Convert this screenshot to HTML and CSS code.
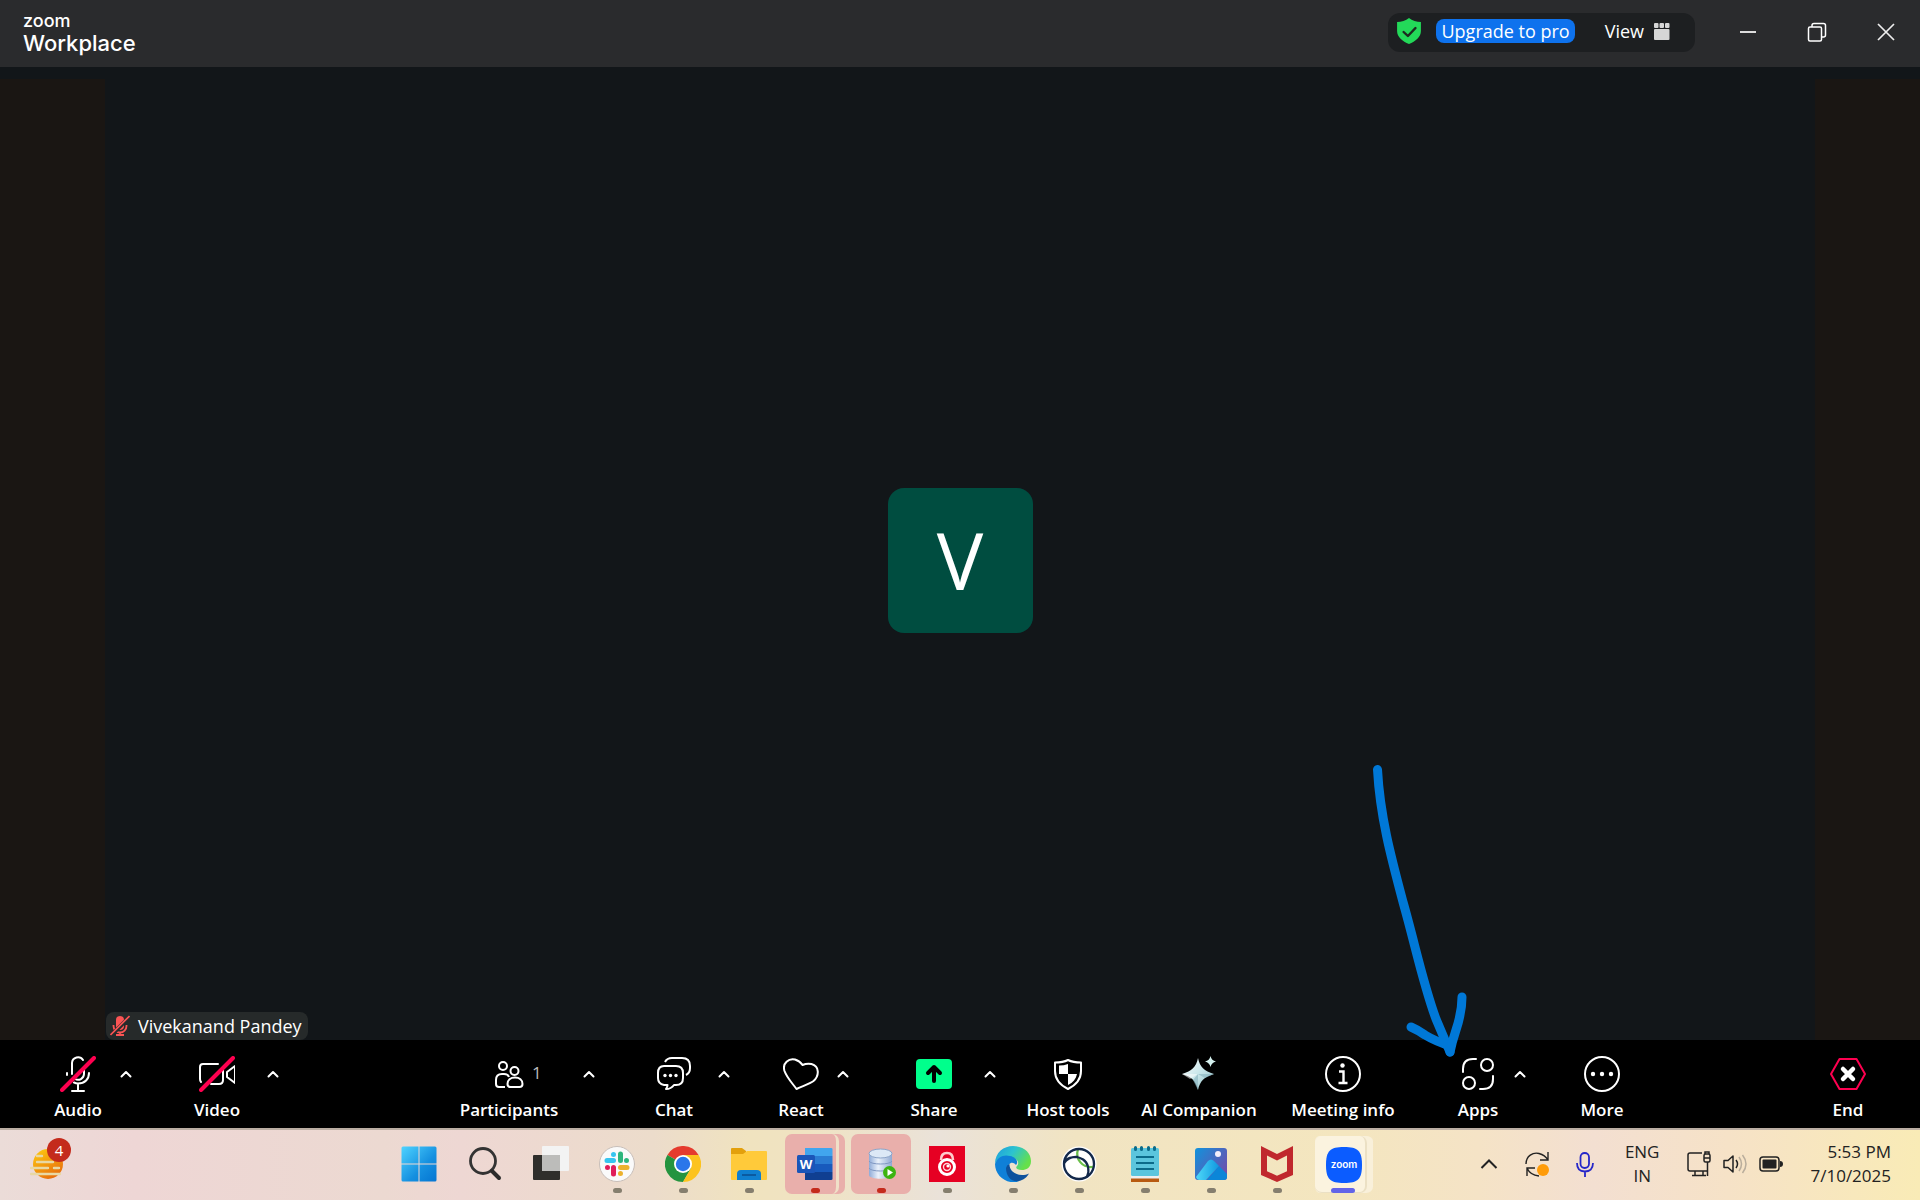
FILE: index.html
```html
<!DOCTYPE html>
<html lang="en">
<head>
<meta charset="utf-8">
<title>Zoom Workplace</title>
<link rel="stylesheet" href="styles.css">
</head>
<body>
<svg class="defs" width="0" height="0" aria-hidden="true">
  <symbol id="up" viewBox="0 0 12 8"><path d="M1.500 6.500 6 2l4.500 4.500" fill="none" stroke="currentColor" stroke-width="2" stroke-linecap="round" stroke-linejoin="round"/></symbol>
</svg>

<header class="titlebar">
  <div class="brand"><span class="brand-zoom">zoom</span><span class="brand-name">Workplace</span></div>
  <div class="status">
    <svg width="26" height="28" viewBox="0 0 24 28" preserveAspectRatio="none"><path d="M12 1c3 2.400 7 4 11 4v9c0 6-5 10.500-11 13C6 24.500 1 20 1 14V5c4 0 8-1.600 11-4z" fill="#23d959"/><path d="m7 15 4 4 7-8" fill="none" stroke="#1d2a20" stroke-width="2.200" stroke-linecap="round" stroke-linejoin="round"/></svg>
    <button class="upgrade">Upgrade to pro</button>
    <button class="view">View
      <svg width="16" height="17" viewBox="0 0 16 17" fill="#d6d6d6"><rect width="4.500" height="5" rx="1"/><rect x="5.500" width="4.500" height="5" rx="1"/><rect x="11" width="4.500" height="5" rx="1"/><rect y="6" width="15.500" height="11" rx="1"/></svg>
    </button>
  </div>
  <div class="window-buttons">
    <button aria-label="Minimize"><svg width="20" height="20" viewBox="0 0 20 20"><path d="M2 10h16" stroke="#ddd" stroke-width="2"/></svg></button>
    <button aria-label="Restore"><svg width="20" height="20" viewBox="0 0 20 20" fill="none" stroke="#fff" stroke-width="1.500"><rect x="1.500" y="5" width="13" height="14" rx="1.500"/><path d="M5 5V3.500Q5 1.500 7 1.500h9.500q2 0 2 2V13q0 2-2 2h-2"/></svg></button>
    <button aria-label="Close"><svg width="20" height="20" viewBox="0 0 20 20"><path d="m2 2 16 16M18 2 2 18" stroke="#eee" stroke-width="1.700"/></svg></button>
  </div>
</header>

<main class="stage">
  <div class="side"></div>
  <section class="video">
    <div class="avatar">V</div>
    <div class="nametag">
      <svg width="20" height="22" viewBox="0 0 20 22"><rect x="6" y="1" width="8" height="14" rx="4" fill="#fa5454"/><path d="M3.500 10v1a6.500 6.500 0 0 0 13 0v-1M10 17v3M6 20h8" fill="none" stroke="#fa5454" stroke-width="1.800"/><path d="M1 20.500 20 1.500" stroke="#262a2a" stroke-width="4"/><path d="M.5 20 19.500 1" stroke="#fa5454" stroke-width="1.600"/></svg>
      Vivekanand Pandey
    </div>
  </section>
  <div class="side"></div>
</main>

<nav class="toolbar">
  <div class="group group-wide">
    <div class="split">
      <button class="tool w76"><svg width="36" height="36" viewBox="0 0 36 36" fill="none" stroke="#fff" stroke-width="2" stroke-linecap="round"><path d="M12 18V7a6 6 0 0 1 11-3M24 13v5a6 6 0 0 1-9 5M7 17v2M29 17c0 6-4 10.500-11 10.500q-2 0-4-1M18 28v6M12 35h12"/><path d="M2 34 34 2" stroke="#ff0050" stroke-width="4"/></svg>Audio</button>
      <button class="chev" aria-label="Audio options"><svg><use href="#up"/></svg></button>
    </div>
    <div class="split">
      <button class="tool w92"><svg width="36" height="36" viewBox="0 0 36 36" fill="none" stroke="#fff" stroke-width="2" stroke-linecap="round" stroke-linejoin="round"><path d="M2 26q-1-1-1-3V11q0-3 3-3h15M24 12v12q0 4-4 4h-8M36 10v17l-8-6v-5z"/><path d="M2 34 34 2" stroke="#ff0050" stroke-width="4"/></svg>Video</button>
      <button class="chev" aria-label="Video options"><svg><use href="#up"/></svg></button>
    </div>
  </div>

  <div class="center">
    <div class="group group-wide">
      <div class="split">
        <button class="tool w140"><span class="badge-wrap"><svg width="36" height="36" viewBox="0 0 36 36" fill="none" stroke="#fff" stroke-width="2"><circle cx="12" cy="10" r="4"/><circle cx="23.500" cy="15" r="4"/><path d="M14 31H8q-3 0-3-3v-4q0-6 6-6h2q4 0 5 3M16.500 28c0-4 3-6.500 7.500-6.500s7.500 2.500 7.500 6.500q0 3-3 3h-9q-3 0-3-3z"/></svg><span class="count">1</span></span>Participants</button>
        <button class="chev" aria-label="Participants options"><svg><use href="#up"/></svg></button>
      </div>
      <div class="split">
        <button class="tool w80"><svg width="36" height="36" viewBox="0 0 36 36" fill="none" stroke="#fff" stroke-width="2" stroke-linejoin="round"><path d="M9 6q2-4 7-4h10q8 0 8 8v2q0 5-4 7M8 10h12q7 0 7 7v5q0 7-7 7h-2q-3 4-8 4 1.500-2 1.500-4H8q-6-1-6-7v-5q0-7 6-7z"/><g fill="#fff" stroke="none"><circle cx="9" cy="19.500" r="1.700"/><circle cx="14.500" cy="19.500" r="1.700"/><circle cx="20" cy="19.500" r="1.700"/></g></svg>Chat</button>
        <button class="chev" aria-label="Chat options"><svg><use href="#up"/></svg></button>
      </div>
      <div class="split">
        <button class="tool w64"><svg width="36" height="36" viewBox="0 0 36 36" fill="none" stroke="#fff" stroke-width="2" stroke-linejoin="round"><path d="M13.500 33C10 28 4 22 1.500 15-1 7 6 2 12 3.500q5 1.500 7.500 5.500 4.500-2 9-1c8 2 8 12 2 17-4 3-11 5-17 8z"/></svg>React</button>
        <button class="chev" aria-label="React options"><svg><use href="#up"/></svg></button>
      </div>
      <div class="split">
        <button class="tool w92"><svg width="36" height="36" viewBox="0 0 36 36"><rect y="3" width="36" height="30" rx="4" fill="#00ff8c"/><path d="M18 25V11M12 17l6-6 6 6" fill="none" stroke="#000" stroke-width="4" stroke-linecap="round" stroke-linejoin="round"/></svg>Share</button>
        <button class="chev" aria-label="Share options"><svg><use href="#up"/></svg></button>
      </div>
    </div>
    <div class="group group-tight">
      <button class="tool w96"><svg width="36" height="36" viewBox="0 0 36 36"><path d="M18 4c4 2 9 2.500 13 2.500V15c0 8-5 14-13 18C10 29 5 23 5 15V6.500C9 6.500 14 6 18 4z" fill="none" stroke="#fff" stroke-width="2" stroke-linejoin="round"/><path d="M18 8v10H9V9.500q5 0 9-1.500zM18 18h9c-1 5-4 8.500-9 11z" fill="#fff"/></svg>Host tools</button>
      <button class="tool w126"><svg width="36" height="36" viewBox="0 0 36 36"><defs><linearGradient id="gem" x1="0" y1="0" x2="1" y2="1"><stop offset="0" stop-color="#fff"/><stop offset=".5" stop-color="#c8e6ea"/><stop offset="1" stop-color="#8fbcc4"/></linearGradient></defs><path d="M17 2c2 9 6 13 16 16-10 3-14 7-16 16C15 25 11 21 1 18 11 15 15 11 17 2z" fill="url(#gem)"/><path d="M17 2v16L9 23 1 18l16 0z" fill="#fff" opacity=".5"/><path d="m17 18 7 4 9-4zM17 18l-5 6 5 10z" fill="#8ab5c0" opacity=".65"/><path d="M29.500 0q1 4.500 5.500 5.500-4.500 1-5.500 5.500-1-4.500-5.500-5.500 4.500-1 5.500-5.500z" fill="#d4f0ee"/></svg>AI Companion</button>
      <button class="tool w122"><svg width="36" height="36" viewBox="0 0 36 36" fill="none" stroke="#fff" stroke-width="2"><circle cx="18" cy="18" r="17"/><circle cx="17.500" cy="9.500" r="2.200" fill="#fff" stroke="none"/><path d="M14 15.500h4.500V27M13.500 27h9" stroke-width="2.400"/></svg>Meeting info</button>
    </div>
    <div class="group group-loose">
      <div class="split">
        <button class="tool w64"><svg width="36" height="36" viewBox="0 0 36 36" fill="none" stroke="#fff" stroke-width="2" stroke-linecap="round"><circle cx="27" cy="9" r="6"/><circle cx="9" cy="27" r="6"/><path d="M3 16v-3Q3 3 13 3h3M20 33h3q10 0 10-10v-3"/></svg>Apps</button>
        <button class="chev" aria-label="Apps options"><svg><use href="#up"/></svg></button>
      </div>
      <button class="tool w64"><svg width="36" height="36" viewBox="0 0 36 36"><circle cx="18" cy="18" r="17" fill="none" stroke="#fff" stroke-width="2"/><g fill="#fff"><circle cx="9" cy="18" r="2.200"/><circle cx="18" cy="18" r="2.200"/><circle cx="27" cy="18" r="2.200"/></g></svg>More</button>
    </div>
  </div>

  <button class="tool w64"><svg width="36" height="36" viewBox="0 0 36 36"><path d="M9.500 3h17L35 18l-8.500 15h-17L1 18z" fill="none" stroke="#ff0050" stroke-width="2" stroke-linejoin="round"/><path d="m13 13 10 10M23 13 13 23" stroke="#fff" stroke-width="4.500" stroke-linecap="round"/></svg>End</button>
</nav>

<footer class="taskbar">
  <button class="weather" aria-label="Weather">
    <svg width="34" height="32" viewBox="0 0 34 32"><defs><linearGradient id="sun" x1="0" y1="0" x2=".6" y2="1"><stop offset="0" stop-color="#ffcf10"/><stop offset="1" stop-color="#e86f0c"/></linearGradient></defs><circle cx="18" cy="16" r="15" fill="url(#sun)"/><path d="M7 8h5M7 14h16M1 20h17M24 20h5M1 26h29" stroke="#e8d8a4" stroke-width="2.400" stroke-linecap="round"/></svg>
    <span class="alert">4</span>
  </button>

  <div class="apps">
    <button class="app" aria-label="Start"><svg width="36" height="36" viewBox="0 0 36 36"><defs><linearGradient id="win" x1="0" y1="0" x2="1" y2="1"><stop offset="0" stop-color="#4fd3ff"/><stop offset=".6" stop-color="#1590e0"/><stop offset="1" stop-color="#0575d2"/></linearGradient></defs><path fill="url(#win)" d="M2 .5h15.500v17H.5V2Q.5.500 2 .5zM18.500.5H34q1.500 0 1.500 1.500v15.500h-17zM.5 18.500h17v17H2Q.5 35.500.5 34zM18.500 18.500h17V34q0 1.500-1.500 1.500H18.500z"/></svg></button>
    <button class="app" aria-label="Search"><svg width="36" height="36" viewBox="0 0 36 36" fill="none" stroke="#2b2b2b"><circle cx="16" cy="15" r="12.500" stroke="#333" stroke-width="2.800"/><path d="m25 25 7 7" stroke-width="4" stroke-linecap="round"/></svg></button>
    <button class="app" aria-label="Task view"><svg width="36" height="36" viewBox="0 0 36 36"><rect y="9" width="27" height="25" rx="1" fill="#2f2e2b"/><rect x="9" width="27" height="25" rx="1" fill="#f3f3f3"/><path d="M9 9h18v16H9z" fill="#bcbcba"/></svg></button>
    <button class="app run" aria-label="Slack"><svg width="36" height="36" viewBox="0 0 36 36" stroke-width="5" stroke-linecap="round"><circle cx="18" cy="18" r="17.500" fill="#fafafa" stroke="#c8beb8" stroke-width="1"/><path d="M8 14.500h6.500M14.500 8.500v0" stroke="#36c5f0"/><path d="M21.500 8v6.500M27.500 14.500v0" stroke="#2eb67d"/><path d="M21.500 21.500H28M21.500 27.500v0" stroke="#ecb22e"/><path d="M14.500 21.500V28M8.500 21.500v0" stroke="#e01e5a"/></svg></button>
    <button class="app run" aria-label="Chrome"><svg width="36" height="36" viewBox="0 0 36 36"><path d="M18 18 2.400 9A18 18 0 0 1 33.600 9z" fill="#e53b2e"/><path d="M18 18 2.400 9A18 18 0 0 0 18 36l8-13.500z" fill="#24943f"/><path d="M18 9h15.600A18 18 0 0 1 18 36l7.800-13.500z" fill="#fcc31e"/><circle cx="18" cy="18" r="9" fill="#fff"/><circle cx="18" cy="18" r="7.200" fill="#2a76ea"/></svg></button>
    <button class="app run" aria-label="File Explorer"><svg width="36" height="36" viewBox="0 0 36 36"><path d="M0 3q0-1 1-1h10l4 3v5H0z" fill="#e3a00c"/><path d="M0 8h12l4-3h19q1 0 1 1v27q0 1-1 1H1q-1 0-1-1z" fill="#ffca3a"/><path d="M6 34v-6q0-4 4-4h16q4 0 4 4v6z" fill="#0f7fd0"/><path d="M11 29h14" stroke="#0a5294" stroke-width="1.600"/></svg></button>
    <button class="app run flagged stacked" aria-label="Word"><svg width="36" height="36" viewBox="0 0 36 36"><path d="M8 2h26q1.500 0 1.500 1v7H8z" fill="#41a5ee"/><path d="M8 10h27.500v8H8z" fill="#2b7cd3"/><path d="M8 18h27.500v8H8z" fill="#185abd"/><path d="M8 26h27.500v7q0 1-1.500 1H8z" fill="#103f91"/><rect y="9" width="18" height="18" rx="1.500" fill="#1b55b8"/><text x="9" y="23" text-anchor="middle" font-family="Open Sans, sans-serif" font-weight="700" font-size="13" fill="#fff">W</text></svg></button>
    <button class="app run flagged" aria-label="Database"><svg width="36" height="36" viewBox="0 0 36 36"><defs><linearGradient id="db"><stop offset="0" stop-color="#8fabd8"/><stop offset=".4" stop-color="#eaf1fb"/><stop offset="1" stop-color="#90a9d2"/></linearGradient></defs><path d="M6 7v22c0 5 23 5 23 0V7z" fill="url(#db)"/><ellipse cx="17.500" cy="7.500" rx="11.500" ry="4.500" fill="#dce8f6" stroke="#8ca4c8"/><path d="M6 15c1 4 22 4 23 0M6 22c1 4 22 4 23 0" fill="none" stroke="#8199c3"/><circle cx="26.500" cy="26.500" r="6.500" fill="#3cb411"/><path d="m24.500 23 5.500 3.500-5.500 3.500z" fill="#fff"/></svg></button>
    <button class="app run" aria-label="Lock"><svg width="36" height="36" viewBox="0 0 36 36"><path d="M0 0h36v36H0z" fill="#e60023"/><path d="M12 14q0-7 6-7t6 7" fill="none" stroke="#fcc" stroke-width="2.600"/><circle cx="18" cy="21" r="7.500" fill="#e60023" stroke="#fff" stroke-width="3"/><circle cx="18" cy="21" r="3.500" fill="none" stroke="#ffd5da" stroke-width="1.400"/><circle cx="19" cy="20" r="1.600" fill="#fff"/></svg></button>
    <button class="app run" aria-label="Edge"><svg width="36" height="36" viewBox="0 0 36 36"><defs><linearGradient id="ed" x1="0" y1="0" x2="1" y2=".5"><stop offset="0" stop-color="#1d9be0"/><stop offset=".5" stop-color="#2cc3cf"/><stop offset="1" stop-color="#66e04a"/></linearGradient></defs><path d="M0 18C0 6 9 0 18 0c11 0 18 7 18 15 0 7-5 9-9 9-5 0-7-2-5-4 3-3 0-8-5-8C9 10 2 12 0 18z" fill="url(#ed)"/><path d="M0 18C2 11 9 8 15 10c6 1 9 6 6 9-4-5-9-1-8 5 1 6 5 11 11 11.500C12 39 0 30 0 18z" fill="#0f80d8"/><path d="M11 22c0 8 5 14 12 13.300C29 34 32 31 34 27.500c-8 4-20 0-19.500-9.500q-3 1-3.500 4z" fill="#0d519d"/></svg></button>
    <button class="app run" aria-label="Connection"><svg width="36" height="36" viewBox="0 0 36 36" fill="none" stroke-width="2.300"><circle cx="18" cy="18" r="17.500" fill="#fff"/><path d="M17 3c-3 10 4 19 15 18" stroke="#6abf4b"/><circle cx="18" cy="18" r="15" stroke="#13294b"/><path d="M4 14c13-8 28 1 22 17M3 17q5-7 14-6" stroke="#13294b"/></svg></button>
    <button class="app run" aria-label="Notepad"><svg width="36" height="36" viewBox="0 0 36 36"><path d="M4 32h28v4H4z" fill="#b85a10"/><path d="M4 29h28v3.500H4z" fill="#eee"/><rect x="4" y="2" width="28" height="28" rx="1.500" fill="#5bc5dd"/><path d="M9 11h18M9 17h18M9 23h18" stroke="#0b6b8a" stroke-width="1.800"/><path d="M8.500 1.500v2M14.500 1.500v2M21.500 1.500v2M27.500 1.500v2" stroke="#0b6b8a" stroke-width="3" stroke-linecap="round"/></svg></button>
    <button class="app run" aria-label="Photos"><svg width="36" height="36" viewBox="0 0 36 36"><defs><linearGradient id="ph" x1="0" y1="0" x2="1" y2=".7"><stop offset="0" stop-color="#1193dc"/><stop offset="1" stop-color="#6c4fae"/></linearGradient><linearGradient id="hill"><stop offset="0" stop-color="#4fd8f8"/><stop offset="1" stop-color="#1098e0"/></linearGradient></defs><rect x="2" y="2" width="32" height="32" rx="3" fill="url(#ph)"/><path d="M14 34 26 20l8 8v3q0 3-3 3z" fill="#0b86d8"/><path d="M3 31 15 15q3-3 6 0l5 5-13 14H6q-2 0-3-3z" fill="url(#hill)"/><circle cx="25" cy="8" r="3" fill="#f4eefa"/></svg></button>
    <button class="app run" aria-label="McAfee"><svg width="36" height="36" viewBox="0 0 36 36"><path d="m2 0 16 8 16-8v29l-16 7-16-7zm6 9.500v15.800l10 4.400 10-4.400V9.500l-10 5z" fill="#c0282d" fill-rule="evenodd"/></svg></button>
    <button class="app run current" aria-label="Zoom"><svg width="36" height="36" viewBox="0 0 36 36"><path d="M18 0c14 0 18 4 18 18s-4 18-18 18S0 32 0 18 4 0 18 0z" fill="#0b5cff"/><text x="18" y="21" text-anchor="middle" font-family="Inter, sans-serif" font-weight="600" font-size="10" fill="#fff">zoom</text></svg></button>
  </div>

  <div class="tray">
    <button aria-label="Hidden icons"><svg width="24" height="24" viewBox="0 0 24 24"><path d="m4.500 16 7.500-7.500 7.500 7.500" fill="none" stroke="#222" stroke-width="2"/></svg></button>
    <button class="sync" aria-label="Sync"><svg width="24" height="26" viewBox="0 0 24 26" fill="none" stroke="#222" stroke-width="1.400"><path d="M1 13C1 5 8 1 14 2.500q6 1.500 9 6.500M23 1v8h-8M2 25v-8h8M2 17q3 7 12 8"/><circle cx="18" cy="19" r="6" fill="#ff9c0a" stroke="none"/></svg></button>
    <button aria-label="Microphone"><svg width="24" height="26" viewBox="0 0 24 26" fill="none" stroke="#2626c8" stroke-width="1.800"><rect x="7.500" y="2" width="8.500" height="15" rx="4.200"/><path d="M4 12c0 6 3 8.500 7.800 8.500S20 18 20 12M12 20.500V26"/></svg></button>
    <button class="lang">ENG<br>IN</button>
    <button class="system" aria-label="Network, sound, battery">
      <svg width="24" height="26" viewBox="0 0 24 26" fill="none" stroke="#222" stroke-width="1.500"><path d="M15 2H3Q1 2 1 4v14q0 2 2 2h17M8 20v4M16 20v4M5 24.500h14"/><rect x="17" y="3" width="6" height="8" rx="1.500"/><path d="M18 3V1h4v2M17 7h6M20.500 11v14"/></svg>
      <svg width="24" height="26" viewBox="0 0 24 26" fill="none" stroke="#222" stroke-width="1.500"><path d="M1 9.500h4L10 5v16l-5-4.500H1z" stroke-linejoin="round"/><path d="M13 9q3 4 0 8"/><path d="M16 6q5 7 0 14M19.500 4q7 9 0 18" stroke="#b9ad9c"/></svg>
      <svg width="24" height="26" viewBox="0 0 24 26"><rect x="1" y="6" width="19" height="14" rx="3" fill="none" stroke="#222" stroke-width="1.500"/><rect x="3.500" y="8.500" width="14" height="9" rx="1" fill="#222"/><path d="M21 10q3 0 3 3t-3 3z" fill="#222"/></svg>
    </button>
    <button class="clock"><time datetime="2025-07-10T17:53">5:53 PM<br>7/10/2025</time></button>
  </div>
</footer>

<svg class="arrow" width="100" height="300" viewBox="0 0 100 300" fill="none" stroke="#0078d7" stroke-width="9" stroke-linecap="round" stroke-linejoin="round" aria-hidden="true">
  <path d="M7.500 9.500C10 56 21 97 33 142c12 42 20 82 33 117q8 19 14 33"/>
  <path d="M41 267q7 3 14 8 10 6 25 11"/>
  <path d="M92 237c0 12-3 24-6 33q-4 12-6 22"/>
</svg>
</body>
</html>
```
FILE: styles.css
```css
* { box-sizing: border-box; }

body {
  margin: 0;
  min-height: 100vh;
  display: flex;
  flex-direction: column;
  position: relative;
  background: #121619;
  font-family: "Open Sans", "Noto Sans", sans-serif;
  font-size: 18px;
  color: #fff;
}

button {
  margin: 0;
  padding: 0;
  border: 0;
  background: none;
  color: inherit;
  font: inherit;
}

svg { display: block; flex: none; }
.defs { position: absolute; }

/* Title bar */
.titlebar {
  display: flex;
  align-items: center;
  height: 67px;
  padding-left: 23px;
  background: #2a2b2d;
}
.brand {
  display: flex;
  flex-direction: column;
  margin-right: auto;
  font-family: Inter, sans-serif;
  font-weight: 500;
}
.brand-zoom { font-size: 18px; line-height: 18px; }
.brand-name { font-size: 22px; line-height: 26px; }
.status {
  display: flex;
  align-items: center;
  height: 39px;
  margin: 0 18px 2px 0;
  padding: 0 25px 3px 8px;
  border-radius: 12px;
  background: #1d1f21;
}
.upgrade {
  height: 24px;
  margin: 0 30px 0 14px;
  padding: 0 5px;
  border-radius: 8px;
  background: #0e72ed;
  line-height: 24px;
}
.view { display: flex; align-items: center; gap: 10px; }
.window-buttons { display: flex; margin-bottom: 4px; }
.window-buttons button {
  display: grid;
  place-items: center;
  width: 69px;
  height: 40px;
}

/* Meeting stage */
.stage {
  flex: 1;
  display: grid;
  grid-template-columns: 105px 1fr 105px;
  padding-top: 12px;
}
.side { background: #1a1613; }
.video {
  position: relative;
  display: grid;
  place-items: center;
  padding-top: 2px;
}
.avatar {
  display: grid;
  place-items: center;
  width: 145px;
  height: 145px;
  border-radius: 16px;
  background: #004d40;
  font-size: 78px;
  font-weight: 500;
  line-height: 145px;
}
.nametag {
  position: absolute;
  left: 1px;
  bottom: 0;
  display: flex;
  align-items: center;
  gap: 8px;
  height: 28px;
  padding: 0 6px 0 4px;
  border-radius: 8px;
  background: #262a2a;
}

/* Meeting toolbar */
.toolbar {
  display: grid;
  grid-template-columns: auto 6fr auto 7fr auto;
  height: 88px;
  padding: 16px 40px 0;
  background: #000;
}
.toolbar > .center { grid-column: 3; }
.toolbar > .tool { grid-column: 5; }
.center { display: flex; }
.group { display: flex; }
.group-wide { gap: 35px; }
.group-tight { gap: 20px; margin: 0 42px 0 20px; }
.group-loose { gap: 40px; }
.split { display: flex; }
.tool {
  display: flex;
  flex-direction: column;
  align-items: center;
  gap: 6px;
  height: 66px;
  font-size: 17px;
  font-weight: 600;
  line-height: 24px;
  white-space: nowrap;
}
.chev { width: 20px; height: 36px; display: grid; place-items: center; }
.chev svg { width: 12px; height: 8px; }
.w64 { width: 64px; }
.w76 { width: 76px; }
.w80 { width: 80px; }
.w92 { width: 92px; }
.w96 { width: 96px; }
.w122 { width: 122px; }
.w126 { width: 126px; }
.w140 { width: 140px; }
.badge-wrap { position: relative; }
.count {
  position: absolute;
  left: 41px;
  top: 5px;
  font-weight: 400;
  color: #bbb;
}

/* Windows taskbar */
.taskbar {
  display: grid;
  grid-template-columns: auto 3fr auto 1fr auto;
  height: 72px;
  padding: 0 29px 0 30px;
  border-top: 2px solid #bbaea3;
  background: linear-gradient(90deg, #ebdcd8 0, #eed6d5 7%, #ecd9d1 20%, #eed7d3 24%, #ecdccb 34%, #f0e3bf 39%, #f0e3c2 42%, #eae2d9 49%, #f1e4c2 56%, #f4e6bf 70%, #f5e3c6 77%, #f3dfd1 83%, #f6e2c7 90%, #f9ebb6 100%);
  color: #222;
  font-size: 17px;
}
.weather { position: relative; align-self: start; margin-top: 18px; }
.alert {
  position: absolute;
  left: 17px;
  top: -10px;
  width: 24px;
  height: 24px;
  border-radius: 50%;
  background: #c42b1c;
  color: #fff;
  font-size: 15px;
  line-height: 24px;
}
.apps { grid-column: 3; display: flex; gap: 6px; padding: 4px 0 6px 12px; }
.app {
  position: relative;
  display: grid;
  place-items: center;
  width: 60px;
  height: 60px;
  border-radius: 7px;
}
.app svg { position: relative; }
.run::after {
  content: "";
  position: absolute;
  left: 26px;
  bottom: 1px;
  width: 9px;
  height: 5px;
  border-radius: 3px;
  background: #857e6e;
}
.flagged { background: #e9afab; }
.flagged::after { background: #c42b1c; }
.stacked::before,
.current::before {
  content: "";
  position: absolute;
  inset: 0 6px 0 0;
  border-right: 3px solid #f0e0c8;
  border-radius: 7px;
}
.current { background: #f9f0da; background-clip: content-box; padding: 2px 0 1px 2px; }
.current::before {
  inset: 2px 6px 1px 2px;
  border: 1px solid #ebe0c4;
  border-width: 0 2px 1px 0;
  background: #fbf3df;
}
.current::after { left: 18px; width: 24px; background: #6264e8; }

.tray {
  grid-column: 5;
  display: flex;
  align-items: center;
  padding-bottom: 2px;
  line-height: 24px;
}
.tray > button + button { margin-left: 24px; }
.system { display: flex; gap: 12px; }
.clock { text-align: right; }
.tray > .lang + .system,
.tray > button + .lang { margin-left: 28px; }
.tray > .system + .clock { margin-left: 27px; }

/* Hand-drawn pointer over the Apps button */
.arrow {
  position: absolute;
  right: 450px;
  bottom: 140px;
  pointer-events: none;
}
```
